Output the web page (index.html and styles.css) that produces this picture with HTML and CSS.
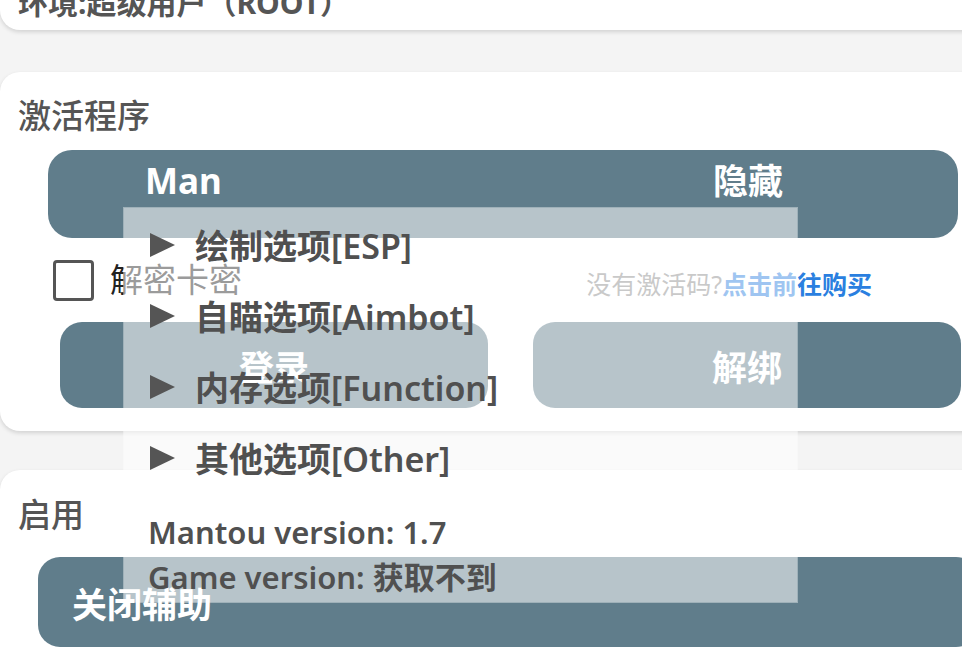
FILE: index.html
```html
<!DOCTYPE html>
<html lang="zh-CN">
<head>
    <meta charset="UTF-8">
    <meta name="viewport" content="width=device-width, initial-scale=1.0">
    <title>Mantou</title>
    <link rel="stylesheet" href="styles.css">
</head>
<body>
    <div class="screen">
      <section class="card card-env">
        <p class="env-text">环境:超级用户（ROOT）</p>
      </section>

      <section class="card card-activate">
        <h2 class="card-title">激活程序</h2>
        <div class="bar">
          <span class="bar-name">Man</span>
          <span class="bar-action">隐藏</span>
        </div>
        <div class="check-row">
          <label class="check">
            <span class="check-box"></span>
            <span class="check-label">解密卡密</span>
          </label>
          <span class="buy">没有激活码?<a class="buy-link">点击前往购买</a></span>
        </div>
        <div class="btn-row">
          <button class="btn">登录</button>
          <button class="btn">解绑</button>
        </div>
      </section>

      <section class="card card-enable">
        <h2 class="card-title">启用</h2>
        <button class="btn btn-wide">关闭辅助</button>
      </section>
    </div>

    <!-- floating menu window -->
    <div class="float-menu">
      <ul class="menu-list">
        <li class="menu-item"><span class="arrow"></span>绘制选项[ESP]</li>
        <li class="menu-item"><span class="arrow"></span>自瞄选项[Aimbot]</li>
        <li class="menu-item"><span class="arrow"></span>内存选项[Function]</li>
        <li class="menu-item"><span class="arrow"></span>其他选项[Other]</li>
      </ul>
      <div class="menu-info">
        <p class="info-line">Mantou version: 1.7</p>
        <p class="info-line">Game version: 获取不到</p>
      </div>
    </div>
</body>
</html>
```

FILE: styles.css
```css
html, body {
    margin: 0;
    padding: 0;
    width: 100vw;
    height: 100vh;
    overflow: hidden;
}
body {
    background: #f4f4f4;
    font-family: "Noto Sans", "Noto Sans CJK SC", sans-serif;
    color: #555;
    position: relative;
}
.screen {
    margin-top: -40px;
}
.card {
    background: #fff;
    border-radius: 20px;
    margin-right: -30px;
    box-shadow: 0 2px 4px rgba(0, 0, 0, 0.14);
}
.card-env {
    padding: 25px 18px 9px;
}
.env-text {
    margin: 0;
    font-size: 30px;
    line-height: 36px;
    font-weight: 700;
    color: #555;
}
.card-activate {
    margin-top: 42px;
    padding: 24px 34px 23px 0;
}
.card-title {
    margin: 0 0 14px 18px;
    font-size: 33px;
    line-height: 40px;
    font-weight: 500;
    color: #555;
}
.bar {
    display: flex;
    align-items: flex-start;
    margin-left: 48px;
    height: 88px;
    padding: 11px 0 0 97px;
    box-sizing: border-box;
    background: #607d8b;
    border-radius: 24px;
    color: #fff;
    font-size: 35px;
    line-height: 40px;
    font-weight: 700;
}
.bar-name {
    flex: 0 0 568px;
}
.check-row {
    display: flex;
    align-items: center;
    height: 84px;
}
.check {
    display: flex;
    align-items: center;
    margin-left: 53px;
}
.check-box {
    width: 35px;
    height: 35px;
    border: 3px solid #555;
    border-radius: 4px;
}
.check-label {
    margin-left: 16px;
    font-size: 33px;
    line-height: 40px;
    color: #222;
}
.buy {
    margin-left: auto;
    margin-right: 86px;
    padding-top: 6px;
    font-size: 25px;
    color: #888;
}
.buy-link {
    color: #2a7fe0;
    font-weight: 700;
}
.btn-row {
    display: flex;
    gap: 45px;
    padding-left: 60px;
}
.btn {
    flex: 0 0 428px;
    height: 86px;
    border: none;
    border-radius: 22px;
    background: #607d8b;
    color: #fff;
    font-family: inherit;
    font-size: 35px;
    font-weight: 700;
    padding: 0;
}
.card-enable {
    margin-top: 39px;
    padding: 25px 0 30px;
}
.card-enable .card-title {
    margin-bottom: 22px;
}
.btn-wide {
    display: block;
    width: 940px;
    height: 90px;
    margin-left: 38px;
    padding-left: 34px;
    text-align: left;
}

/* floating menu over the page */
.float-menu {
    position: absolute;
    left: 124px;
    top: 208px;
    width: 673px;
    height: 394px;
    background: rgba(255, 255, 255, 0.55);
    box-shadow: 0 0 0 1px rgba(255, 255, 255, 0.4);
}
.menu-list {
    list-style: none;
    margin: 0;
    padding: 0 0 0 26px;
}
.menu-item {
    display: flex;
    align-items: center;
    height: 71px;
    padding-top: 2px;
    box-sizing: border-box;
    font-size: 34px;
    font-weight: 600;
    color: #505050;
}
.arrow {
    width: 0;
    height: 0;
    border-left: 25px solid #555;
    border-top: 12px solid transparent;
    border-bottom: 12px solid transparent;
    margin-right: 20px;
}
.menu-info {
    padding: 18px 0 0 24px;
}
.info-line {
    margin: 0;
    font-size: 31px;
    line-height: 45px;
    font-weight: 600;
    color: #505050;
}
```
